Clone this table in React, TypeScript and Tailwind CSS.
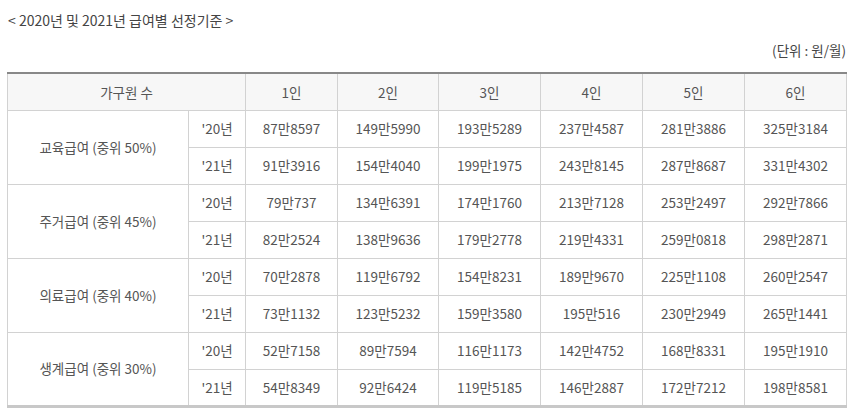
const font = { fontFamily: '"Noto Sans CJK KR", "Noto Sans", sans-serif' };

type Group = { label: string; y20: string[]; y21: string[] };

const groups: Group[] = [
  {
    label: "교육급여 (중위 50%)",
    y20: ["87만8597", "149만5990", "193만5289", "237만4587", "281만3886", "325만3184"],
    y21: ["91만3916", "154만4040", "199만1975", "243만8145", "287만8687", "331만4302"],
  },
  {
    label: "주거급여 (중위 45%)",
    y20: ["79만737", "134만6391", "174만1760", "213만7128", "253만2497", "292만7866"],
    y21: ["82만2524", "138만9636", "179만2778", "219만4331", "259만0818", "298만2871"],
  },
  {
    label: "의료급여 (중위 40%)",
    y20: ["70만2878", "119만6792", "154만8231", "189만9670", "225만1108", "260만2547"],
    y21: ["73만1132", "123만5232", "159만3580", "195만516", "230만2949", "265만1441"],
  },
  {
    label: "생계급여 (중위 30%)",
    y20: ["52만7158", "89만7594", "116만1173", "142만4752", "168만8331", "195만1910"],
    y21: ["54만8349", "92만6424", "119만5185", "146만2887", "172만7212", "198만8581"],
  },
];

const cell = "border border-[#d2d2d2] h-[37px] p-0 text-center align-middle";

export default function App() {
  return (
    <div className="w-[867px] h-[420px] bg-white text-[#555] text-[13.5px]" style={font}>
      <div className="pl-[7px] w-[846px] pt-[11px]">
        <p className="leading-[18px] text-[#444] text-[14px] pl-px">&lt; 2020년 및 2021년 급여별 선정기준 &gt;</p>
        <p className="leading-[18px] text-right mt-[12px] text-[#444]">(단위 : 원/월)</p>

        <table className="mt-[13px] w-[839px] table-fixed border-collapse border-t-2 border-t-[#888] border-b-[3px] border-b-[#c8c8c8]">
          <colgroup>
            <col className="w-[181px]" />
            <col className="w-[57px]" />
            <col className="w-[92px]" />
            <col className="w-[101px]" />
            <col className="w-[102px]" />
            <col className="w-[102px]" />
            <col className="w-[102px]" />
            <col className="w-[102px]" />
          </colgroup>
          <thead>
            <tr className="bg-[#f7f7f7]">
              <th colSpan={2} className={`${cell} font-normal border-t-0`}>가구원 수</th>
              {["1인", "2인", "3인", "4인", "5인", "6인"].map((h) => (
                <th key={h} className={`${cell} font-normal border-t-0`}>{h}</th>
              ))}
            </tr>
          </thead>
          <tbody>
            {groups.map((g, gi) => (
              <>
                <tr key={`${gi}a`}>
                  <td rowSpan={2} className={cell}>{g.label}</td>
                  <td className={cell}>'20년</td>
                  {g.y20.map((v, i) => (
                    <td key={i} className={cell}>{v}</td>
                  ))}
                </tr>
                <tr key={`${gi}b`}>
                  <td className={`${cell} ${gi === groups.length - 1 ? "border-b-0" : ""}`}>'21년</td>
                  {g.y21.map((v, i) => (
                    <td key={i} className={`${cell} ${gi === groups.length - 1 ? "border-b-0" : ""}`}>{v}</td>
                  ))}
                </tr>
              </>
            ))}
          </tbody>
        </table>
      </div>
    </div>
  );
}
